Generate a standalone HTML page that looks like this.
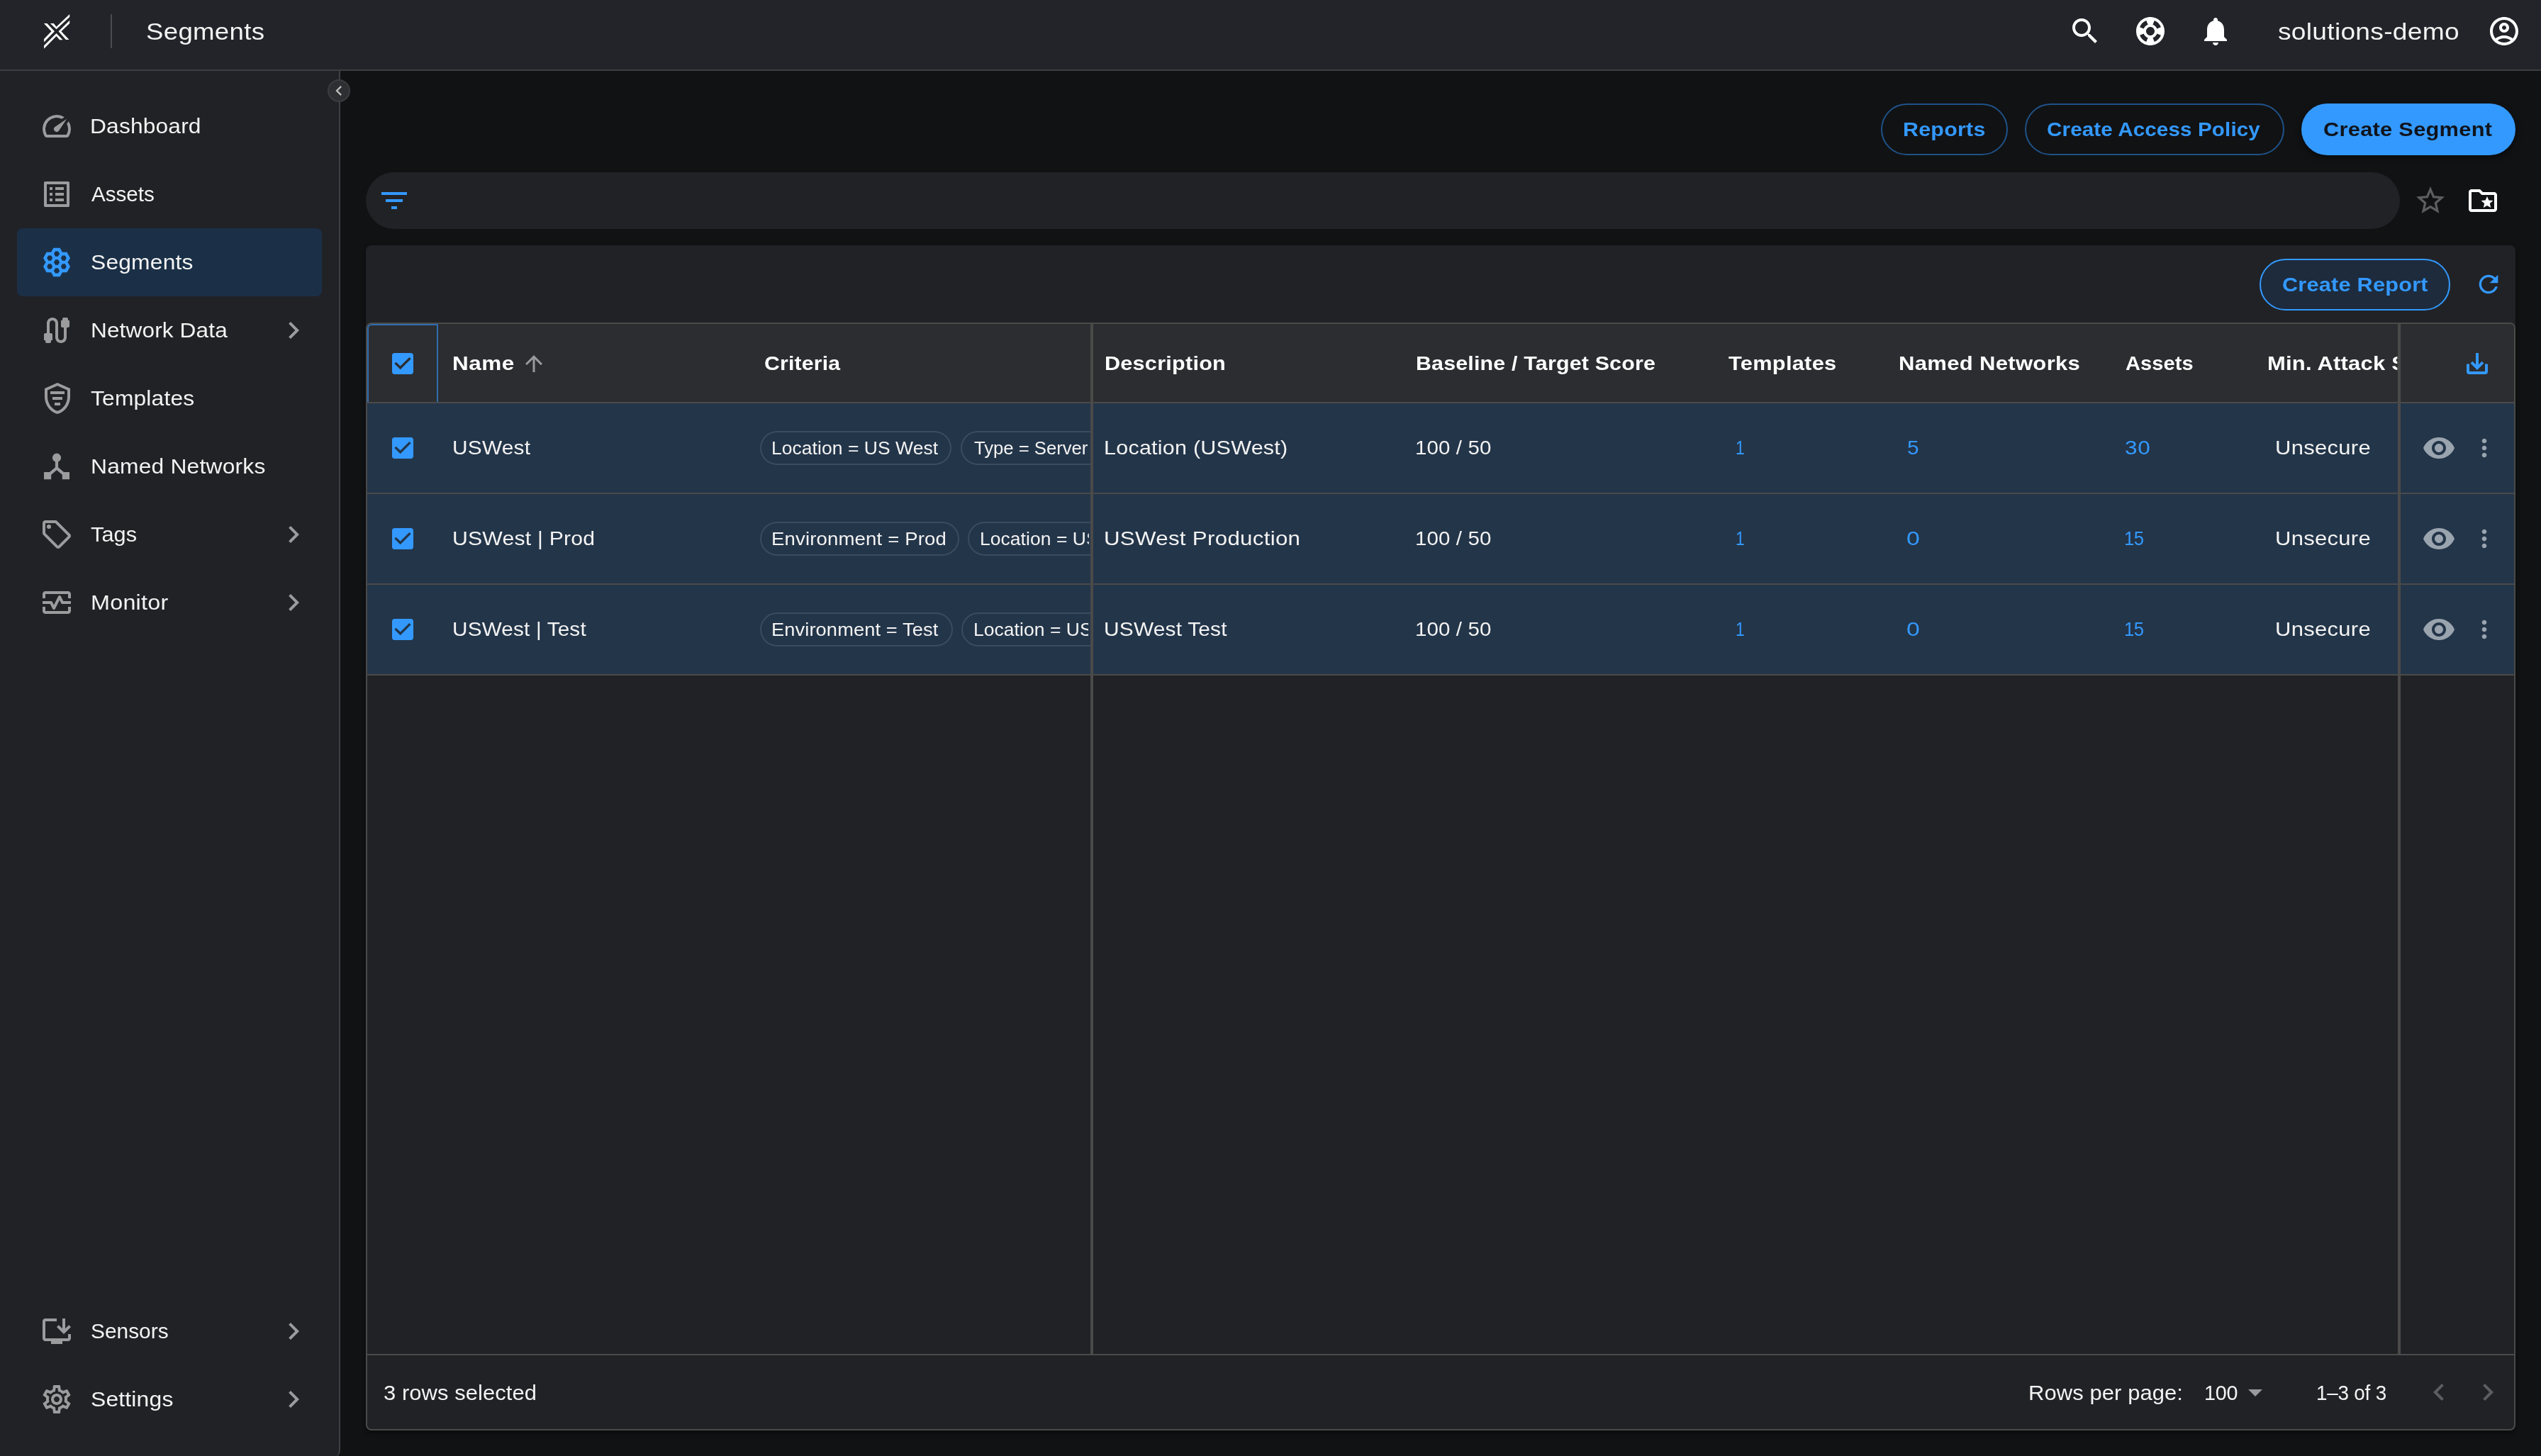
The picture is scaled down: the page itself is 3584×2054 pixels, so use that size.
<!DOCTYPE html>
<html lang="en"><head><meta charset="utf-8"><title>Segments</title>
<style>
html,body{margin:0;padding:0}
html{overflow:hidden;background:#111214}
body{width:100vw;height:calc(100vw * 0.5731027);min-width:0;background:#111214;position:relative;overflow:hidden;font-family:"Liberation Sans", sans-serif}
#app{position:absolute;left:0;top:0;width:3584px;height:2054px;overflow:hidden;will-change:transform;transform-origin:0 0;transform:scale(tan(atan2(100vw,3584px)))}
#app div,#app svg,#app span,#app header,#app nav,#app main,#app section,#app footer,#app a,#app h1{position:absolute;display:block;margin:0;padding:0;text-decoration:none}
.g{left:0;top:0;width:0;height:0;overflow:visible}
.t{white-space:nowrap;line-height:1;transform-origin:0 0}
</style></head><body><div id="app">
<header class="g" role="banner">
<div style="left:0px;top:0px;width:3584px;height:98px;background:#232429;border-bottom:2px solid #3d3e42"></div>
<svg style="left:40px;top:0px" width="80" height="98" viewBox="40 0 80 98"><g fill="#fff"><polygon points="61.9,33.1 66.4,33.1 77,44.2 62.1,59.5 62.1,55 72.5,44.2"/><polygon points="98.2,19.9 98.2,23.9 79.5,41.3 70.8,33.1 75.8,33.1 79.5,37.8"/><polygon points="98.2,28.75 98.2,33 86.4,44.2 97.5,55.9 92.9,55.9 82.5,44.2"/><polygon points="62.1,68.65 62.1,64.3 79.5,47.1 88.6,56.2 84,56.2 79.5,50.9"/></g></svg>
<div style="left:156px;top:20px;width:2px;height:48px;background:#4b4c50"></div>
<h1 class="t" style="left:205.52px;top:27.21px;font-size:34px;font-weight:400;color:#f3f3f3;letter-spacing:0.273px;transform:scaleX(1.0772)">Segments</h1>
<svg style="left:2917px;top:20px" width="48" height="48" viewBox="0 0 24 24" fill="#fff"><path fill-rule="evenodd" d="M15.5 14h-.79l-.28-.27C15.41 12.59 16 11.11 16 9.5 16 5.91 13.09 3 9.5 3S3 5.91 3 9.5 5.91 16 9.5 16c1.61 0 3.09-.59 4.23-1.57l.27.28v.79l5 4.99L20.49 19l-4.99-5zm-6 0C7.01 14 5 11.99 5 9.5S7.01 5 9.5 5 14 7.01 14 9.5 11.99 14 9.5 14z"/></svg>
<svg style="left:3009px;top:20px" width="48" height="48" viewBox="0 0 24 24" fill="#fff"><path fill-rule="evenodd" d="M12 2C6.48 2 2 6.48 2 12s4.48 10 10 10 10-4.48 10-10S17.52 2 12 2zm7.46 7.12-2.78 1.15c-.51-1.36-1.58-2.44-2.95-2.94l1.15-2.78c2.1.8 3.77 2.47 4.58 4.57zM12 15c-1.66 0-3-1.34-3-3s1.34-3 3-3 3 1.34 3 3-1.34 3-3 3zM9.13 4.54l1.17 2.78c-1.38.5-2.47 1.59-2.98 2.97L4.54 9.13c.81-2.11 2.48-3.78 4.59-4.59zM4.54 14.87l2.78-1.15c.51 1.38 1.59 2.46 2.97 2.96l-1.17 2.78c-2.1-.81-3.77-2.48-4.58-4.59zm10.34 4.59-1.15-2.78c1.37-.51 2.45-1.59 2.95-2.97l2.78 1.17c-.81 2.1-2.48 3.77-4.58 4.58z"/></svg>
<svg style="left:3101px;top:20px" width="48" height="48" viewBox="0 0 24 24" fill="#fff"><path fill-rule="evenodd" d="M12 22c1.1 0 2-.9 2-2h-4c0 1.1.89 2 2 2zm6-6v-5c0-3.07-1.64-5.64-4.5-6.32V4c0-.83-.67-1.5-1.5-1.5s-1.5.67-1.5 1.5v.68C7.63 5.36 6 7.92 6 11v5l-2 2v1h16v-1l-2-2z"/></svg>
<span class="t" style="left:3212.80px;top:27.21px;font-size:34px;font-weight:400;color:#f3f3f3;letter-spacing:0.264px;transform:scaleX(1.0923)">solutions-demo</span>
<svg style="left:3508px;top:20px" width="48" height="48" viewBox="0 0 24 24" fill="#fff"><path fill-rule="evenodd" d="M12 2C6.48 2 2 6.48 2 12s4.48 10 10 10 10-4.48 10-10S17.52 2 12 2zM7.35 18.5C8.66 17.56 10.26 17 12 17s3.34.56 4.65 1.5c-1.31.94-2.91 1.5-4.65 1.5s-3.34-.56-4.65-1.5zm10.79-1.38C16.45 15.8 14.32 15 12 15s-4.45.8-6.14 2.12C4.7 15.73 4 13.95 4 12c0-4.42 3.58-8 8-8s8 3.58 8 8c0 1.95-.7 3.73-1.86 5.12zM12 6c-1.93 0-3.5 1.57-3.5 3.5S10.07 13 12 13s3.5-1.57 3.5-3.5S13.93 6 12 6zm0 5c-.83 0-1.5-.67-1.5-1.5S11.17 8 12 8s1.5.67 1.5 1.5S12.83 11 12 11z"/></svg>
</header>
<nav class="g" aria-label="Main navigation">
<div style="left:0px;top:100px;width:478px;height:1956px;background:#212226;border-right:2px solid #3f4044;border-radius:0 0 10px 0"></div>
<div style="left:462px;top:112px;width:32px;height:32px;border-radius:50%;background:#2d2f32;border:2px solid #3b3d40;box-sizing:border-box"></div>
<svg style="left:464px;top:114px" width="28" height="28" viewBox="0 0 24 24" fill="#bdbdbd"><path fill-rule="evenodd" d="M15.41 7.41 14 6l-6 6 6 6 1.41-1.41L10.83 12z"/></svg>
<div style="left:24px;top:322px;width:430px;height:96px;background:#1b3047;border-radius:8px"></div>
<svg style="left:56px;top:154px" width="48" height="48" viewBox="0 0 24 24" fill="#9c9c9e"><path fill-rule="evenodd" d="m20.38 8.57-1.23 1.85a8 8 0 0 1-.22 7.58H5.07A8 8 0 0 1 15.58 6.85l1.85-1.23A10 10 0 0 0 3.35 19a2 2 0 0 0 1.72 1h13.85a2 2 0 0 0 1.74-1 10 10 0 0 0-.27-10.44zm-9.79 6.84a2 2 0 0 0 2.83 0l5.66-8.49-8.49 5.66a2 2 0 0 0 0 2.83z"/></svg>
<a class="t" style="left:126.89px;top:163.10px;font-size:30px;font-weight:400;color:#f3f3f3;letter-spacing:0.169px;transform:scaleX(1.0566)">Dashboard</a>
<svg style="left:56px;top:250px" width="48" height="48" viewBox="0 0 24 24" fill="#9c9c9e"><path fill-rule="evenodd" d="M11 7h6v2h-6zm0 4h6v2h-6zm0 4h6v2h-6zM7 7h2v2H7zm0 4h2v2H7zm0 4h2v2H7zM20.1 3H3.9c-.5 0-.9.4-.9.9v16.2c0 .4.4.9.9.9h16.2c.4 0 .9-.5.9-.9V3.9c0-.5-.5-.9-.9-.9zM19 19H5V5h14v14z"/></svg>
<a class="t" style="left:128.60px;top:259.10px;font-size:30px;font-weight:400;color:#f3f3f3;letter-spacing:-0.034px;transform:scaleX(0.9892)">Assets</a>
<svg style="left:56px;top:346px" width="48" height="48" viewBox="0 0 24 24"><g transform="translate(12 12) scale(0.95 1) translate(-12 -12)"><path d="M15.45 12.00 L13.73 14.99 L10.28 14.99 L8.55 12.00 L10.27 9.01 L13.73 9.01ZM15.45 6.02 L13.73 9.01 L10.28 9.01 L8.55 6.02 L10.27 3.04 L13.73 3.04ZM15.45 17.98 L13.73 20.96 L10.28 20.96 L8.55 17.98 L10.27 14.99 L13.73 14.99ZM20.62 9.01 L18.90 12.00 L15.45 12.00 L13.73 9.01 L15.45 6.02 L18.90 6.02ZM20.62 14.99 L18.90 17.98 L15.45 17.98 L13.73 14.99 L15.45 12.00 L18.90 12.00ZM10.27 9.01 L8.55 12.00 L5.10 12.00 L3.37 9.01 L5.10 6.02 L8.55 6.02ZM10.27 14.99 L8.55 17.98 L5.10 17.98 L3.37 14.99 L5.10 12.00 L8.55 12.00Z" fill="none" stroke="#3399ff" stroke-width="2.35" stroke-linejoin="miter"/></g></svg>
<a class="t" aria-current="page" style="left:128.04px;top:355.10px;font-size:30px;font-weight:400;color:#f3f3f3;letter-spacing:0.187px;transform:scaleX(1.0589)">Segments</a>
<svg style="left:56px;top:442px" width="48" height="48" viewBox="0 0 24 24" fill="#9c9c9e"><path fill-rule="evenodd" d="M20 5V4c0-.55-.45-1-1-1h-2c-.55 0-1 .45-1 1v1h-1v4c0 .55.45 1 1 1h1v7c0 1.1-.9 2-2 2s-2-.9-2-2V7c0-2.21-1.79-4-4-4S5 4.79 5 7v7H4c-.55 0-1 .45-1 1v4h1v1c0 .55.45 1 1 1h2c.55 0 1-.45 1-1v-1h1v-4c0-.55-.45-1-1-1H7V7c0-1.1.9-2 2-2s2 .9 2 2v10c0 2.21 1.79 4 4 4s4-1.79 4-4v-7h1c.55 0 1-.45 1-1V5h-1z"/></svg>
<a class="t" style="left:128.40px;top:451.10px;font-size:30px;font-weight:400;color:#f3f3f3;letter-spacing:0.141px;transform:scaleX(1.0513)">Network Data</a>
<svg style="left:390px;top:442px" width="48" height="48" viewBox="0 0 24 24" fill="#9c9c9e"><path fill-rule="evenodd" d="M10 6 8.59 7.41 13.17 12l-4.58 4.59L10 18l6-6z"/></svg>
<svg style="left:56.5px;top:538px" width="48" height="48" viewBox="0 0 24 24" fill="#9c9c9e"><path fill-rule="evenodd" d="M12 1 3 5v6c0 5.55 3.84 10.74 9 12 5.16-1.26 9-6.45 9-12V5l-9-4zm0 2.18 7 3.12v4.7c0 4.52-2.98 8.69-7 9.93-4.02-1.24-7-5.41-7-9.93V6.3l7-3.12zM7 7h10v2H7zm1.5 4h7v2h-7zm1.5 4h4v2h-4z"/></svg>
<a class="t" style="left:128.30px;top:547.10px;font-size:30px;font-weight:400;color:#f3f3f3;letter-spacing:0.166px;transform:scaleX(1.0587)">Templates</a>
<svg style="left:56px;top:634px" width="48" height="48" viewBox="0 0 24 24"><circle cx="12" cy="5.85" r="3.05" fill="#9c9c9e"/><rect x="3" y="16" width="5.1" height="5.1" fill="#9c9c9e"/><rect x="15.9" y="16" width="5.1" height="5.1" fill="#9c9c9e"/><path d="M12 6V13.2M12 13.2L5.6 18.6M12 13.2L18.4 18.6" stroke="#9c9c9e" stroke-width="2.1" fill="none"/></svg>
<a class="t" style="left:128.38px;top:643.10px;font-size:30px;font-weight:400;color:#f3f3f3;letter-spacing:0.175px;transform:scaleX(1.0600)">Named Networks</a>
<svg style="left:56px;top:730px" width="48" height="48" viewBox="0 0 24 24" fill="#9c9c9e"><path fill-rule="evenodd" d="m21.41 11.58-9-9C12.05 2.22 11.55 2 11 2H4c-1.1 0-2 .9-2 2v7c0 .55.22 1.05.59 1.42l9 9c.36.36.86.58 1.41.58s1.05-.22 1.41-.59l7-7c.37-.36.59-.86.59-1.41s-.23-1.06-.59-1.42zM13 20.01 4 11V4h7v-.01l9 9-7 7.02z"/><circle cx="6.5" cy="6.5" r="1.5"/></svg>
<a class="t" style="left:128.30px;top:739.10px;font-size:30px;font-weight:400;color:#f3f3f3;letter-spacing:0.080px;transform:scaleX(1.0222)">Tags</a>
<svg style="left:390px;top:730px" width="48" height="48" viewBox="0 0 24 24" fill="#9c9c9e"><path fill-rule="evenodd" d="M10 6 8.59 7.41 13.17 12l-4.58 4.59L10 18l6-6z"/></svg>
<svg style="left:56px;top:826px" width="48" height="48" viewBox="0 0 24 24" fill="#9c9c9e"><path fill-rule="evenodd" d="M20 4H4c-1.1 0-2 .9-2 2v3h2V6h16v3h2V6c0-1.1-.9-2-2-2zm0 14H4v-3H2v3c0 1.1.9 2 2 2h16c1.1 0 2-.9 2-2v-3h-2v3zM14.89 7.55c-.34-.68-1.45-.68-1.79 0L10 13.76l-1.11-2.21A.988.988 0 0 0 8 11H2v2h5.38l1.72 3.45c.18.34.52.55.9.55s.72-.21.89-.55L14 10.24l1.11 2.21c.17.34.51.55.89.55h6v-2h-5.38l-1.73-3.45z"/></svg>
<a class="t" style="left:128.34px;top:835.10px;font-size:30px;font-weight:400;color:#f3f3f3;letter-spacing:0.210px;transform:scaleX(1.0785)">Monitor</a>
<svg style="left:390px;top:826px" width="48" height="48" viewBox="0 0 24 24" fill="#9c9c9e"><path fill-rule="evenodd" d="M10 6 8.59 7.41 13.17 12l-4.58 4.59L10 18l6-6z"/></svg>
<svg style="left:56px;top:1854px" width="48" height="48" viewBox="0 0 24 24" fill="#9c9c9e"><path fill-rule="evenodd" d="M20 17H4V5h8V3H4c-1.11 0-2 .89-2 2v12c0 1.1.89 2 2 2h4v2h8v-2h4c1.1 0 2-.9 2-2v-3h-2v3zm-3-3 5-5-1.41-1.41L18 10.17V3h-2v7.17l-2.59-2.58L12 9z"/></svg>
<a class="t" style="left:128.00px;top:1863.10px;font-size:30px;font-weight:400;color:#f3f3f3;letter-spacing:-0.011px;transform:scaleX(0.9964)">Sensors</a>
<svg style="left:390px;top:1854px" width="48" height="48" viewBox="0 0 24 24" fill="#9c9c9e"><path fill-rule="evenodd" d="M10 6 8.59 7.41 13.17 12l-4.58 4.59L10 18l6-6z"/></svg>
<svg style="left:56px;top:1950px" width="48" height="48" viewBox="0 0 24 24" fill="#9c9c9e"><path fill-rule="evenodd" d="M19.43 12.98c.04-.32.07-.64.07-.98 0-.34-.03-.66-.07-.98l2.11-1.65c.19-.15.24-.42.12-.64l-2-3.46c-.09-.16-.26-.25-.44-.25-.06 0-.12.01-.17.03l-2.49 1c-.52-.4-1.08-.73-1.69-.98l-.38-2.65C14.46 2.18 14.25 2 14 2h-4c-.25 0-.46.18-.49.42l-.38 2.65c-.61.25-1.17.59-1.69.98l-2.49-1c-.06-.02-.12-.03-.18-.03-.17 0-.34.09-.43.25l-2 3.46c-.13.22-.07.49.12.64l2.11 1.65c-.04.32-.07.65-.07.98 0 .33.03.66.07.98l-2.11 1.65c-.19.15-.24.42-.12.64l2 3.46c.09.16.26.25.44.25.06 0 .12-.01.17-.03l2.49-1c.52.4 1.08.73 1.69.98l.38 2.65c.03.24.24.42.49.42h4c.25 0 .46-.18.49-.42l.38-2.65c.61-.25 1.17-.59 1.69-.98l2.49 1c.06.02.12.03.18.03.17 0 .34-.09.43-.25l2-3.46c.12-.22.07-.49-.12-.64l-2.11-1.65zm-1.98-1.71c.04.31.05.52.05.73 0 .21-.02.43-.05.73l-.14 1.13.89.7 1.08.84-.7 1.21-1.27-.51-1.04-.42-.9.68c-.43.32-.84.56-1.25.73l-1.06.43-.16 1.13-.2 1.35h-1.4l-.19-1.35-.16-1.13-1.06-.43c-.43-.18-.83-.41-1.23-.71l-.91-.7-1.06.43-1.27.51-.7-1.21 1.08-.84.89-.7-.14-1.13c-.03-.31-.05-.54-.05-.74s.02-.43.05-.73l.14-1.13-.89-.7-1.08-.84.7-1.21 1.27.51 1.04.42.9-.68c.43-.32.84-.56 1.25-.73l1.06-.43.16-1.13.2-1.35h1.39l.19 1.35.16 1.13 1.06.43c.43.18.83.41 1.23.71l.91.7 1.06-.43 1.27-.51.7 1.21-1.07.85-.89.7.14 1.13zM12 8c-2.21 0-4 1.79-4 4s1.79 4 4 4 4-1.79 4-4-1.79-4-4-4zm0 6c-1.1 0-2-.9-2-2s.9-2 2-2 2 .9 2 2-.9 2-2 2z"/></svg>
<a class="t" style="left:127.94px;top:1959.10px;font-size:30px;font-weight:400;color:#f3f3f3;letter-spacing:0.157px;transform:scaleX(1.0623)">Settings</a>
<svg style="left:390px;top:1950px" width="48" height="48" viewBox="0 0 24 24" fill="#9c9c9e"><path fill-rule="evenodd" d="M10 6 8.59 7.41 13.17 12l-4.58 4.59L10 18l6-6z"/></svg>
</nav>
<main class="g">
<section class="g" aria-label="Actions">
<div style="left:2653px;top:146px;width:179px;height:73px;border-radius:36.5px;box-sizing:border-box;border:2px solid #1f5288"></div>
<span class="t" style="left:2684.12px;top:168.69px;font-size:28px;font-weight:700;color:#3399ff;letter-spacing:0.239px;transform:scaleX(1.0847)">Reports</span>
<div style="left:2856px;top:146px;width:366px;height:73px;border-radius:36.5px;box-sizing:border-box;border:2px solid #1f5288"></div>
<span class="t" style="left:2887.44px;top:168.69px;font-size:28px;font-weight:700;color:#3399ff;letter-spacing:0.139px;transform:scaleX(1.0559)">Create Access Policy</span>
<div style="left:3246px;top:146px;width:302px;height:73px;border-radius:36.5px;box-sizing:border-box;background:#3399ff;box-shadow:0 4px 8px rgba(0,0,0,.5)"></div>
<span class="t" style="left:3277.40px;top:168.69px;font-size:28px;font-weight:700;color:#10141c;letter-spacing:0.259px;transform:scaleX(1.0989)">Create Segment</span>
</section>
<section class="g" aria-label="Filter">
<div style="left:516px;top:243px;width:2869px;height:80px;border-radius:40px;box-sizing:border-box;background:#212226"></div>
<svg style="left:532px;top:259px" width="48" height="48" viewBox="0 0 24 24" fill="#3399ff"><path fill-rule="evenodd" d="M10 18h4v-2h-4v2zM3 6v2h18V6H3zm3 7h12v-2H6v2z"/></svg>
<svg style="left:3404px;top:259px" width="48" height="48" viewBox="0 0 24 24" fill="#5d5e62"><path fill-rule="evenodd" d="m22 9.24-7.19-.62L12 2 9.19 8.63 2 9.24l5.46 4.73L5.82 21 12 17.27 18.18 21l-1.63-7.03L22 9.24zM12 15.4l-3.76 2.27 1-4.28-3.32-2.88 4.38-.38L12 6.1l1.71 4.04 4.38.38-3.32 2.88 1 4.28L12 15.4z"/></svg>
<svg style="left:3478px;top:259px" width="48" height="48" viewBox="0 0 24 24" fill="#fff"><path fill-rule="evenodd" d="M20 6h-8l-2-2H4c-1.1 0-2 .9-2 2v12c0 1.1.9 2 2 2h16c1.1 0 2-.9 2-2V8c0-1.1-.9-2-2-2zm0 12H4V6h5.17l2 2H20v10zm-6.92-3.96L12.39 17 15 15.47 17.61 17l-.69-2.96 2.3-1.99-3.03-.26L15 9l-1.19 2.79-3.03.26z"/></svg>
</section>
<section class="g" aria-label="Segments table">
<div style="left:516px;top:346px;width:3032px;height:1672px;background:#212226;border-radius:8px;box-shadow:0 3px 6px rgba(0,0,0,.45)"></div>
<div style="left:3187px;top:365px;width:269px;height:73px;border-radius:36.5px;box-sizing:border-box;border:2px solid #3399ff;background:#1d2b3c"></div>
<span class="t" style="left:3218.51px;top:387.69px;font-size:28px;font-weight:700;color:#3399ff;letter-spacing:0.232px;transform:scaleX(1.0937)">Create Report</span>
<svg style="left:3490px;top:381px" width="40" height="40" viewBox="0 0 24 24" fill="#3399ff"><path fill-rule="evenodd" d="M17.65 6.35C16.2 4.9 14.21 4 12 4c-4.42 0-7.99 3.58-7.99 8s3.57 8 7.99 8c3.73 0 6.84-2.55 7.73-6h-2.08c-.82 2.33-3.04 4-5.65 4-3.31 0-6-2.69-6-6s2.69-6 6-6c1.66 0 3.14.69 4.22 1.78L13 11h7V4l-2.35 2.35z"/></svg>
<div class="g" role="grid" aria-rowcount="4">
<div style="left:516px;top:455px;width:3032px;height:1563px;border:2px solid #4a4a49;border-radius:8px;box-sizing:border-box"></div>
<div style="left:518px;top:457px;width:3028px;height:110px;background:#2c2d30;border-radius:6px 6px 0 0"></div>
<div style="left:518px;top:567px;width:3028px;height:2px;background:#4a4a49"></div>
<div style="left:518px;top:569px;width:3028px;height:126px;background:#233549"></div>
<div style="left:518px;top:695px;width:3028px;height:2px;background:#4a4a49"></div>
<div style="left:518px;top:697px;width:3028px;height:126px;background:#233549"></div>
<div style="left:518px;top:823px;width:3028px;height:2px;background:#4a4a49"></div>
<div style="left:518px;top:825px;width:3028px;height:126px;background:#233549"></div>
<div style="left:518px;top:951px;width:3028px;height:2px;background:#4a4a49"></div>
<div style="left:518px;top:1910px;width:3028px;height:2px;background:#4a4a49"></div>
<div style="left:1538px;top:457px;width:4px;height:1453px;background:#4a4a49"></div>
<div style="left:3382px;top:457px;width:4px;height:1453px;background:#4a4a49"></div>
<div style="left:518px;top:457px;width:100px;height:110px;border:2px solid #2f6db0;border-bottom:none;box-sizing:border-box;border-radius:6px 0 0 0"></div>
<div class="g" role="row">
<svg style="left:548px;top:493px" width="40" height="40" viewBox="0 0 24 24" fill="#3399ff"><path fill-rule="evenodd" d="M19 3H5c-1.11 0-2 .9-2 2v14c0 1.1.89 2 2 2h14c1.11 0 2-.9 2-2V5c0-1.1-.89-2-2-2zm-9 14-5-5 1.41-1.41L10 14.17l7.59-7.59L19 8l-9 9z"/></svg>
<span class="t" style="left:637.78px;top:498.99px;font-size:28px;font-weight:700;color:#fff;letter-spacing:0.485px;transform:scaleX(1.1242)">Name</span>
<svg style="left:735px;top:495px" width="36" height="36" viewBox="0 0 24 24" fill="#9a9a9c"><path fill-rule="evenodd" d="m4 12 1.41 1.41L11 7.83V20h2V7.83l5.58 5.59L20 12l-8-8-8 8z"/></svg>
<span class="t" style="left:1077.62px;top:498.99px;font-size:28px;font-weight:700;color:#fff;letter-spacing:0.178px;transform:scaleX(1.0779)">Criteria</span>
<span class="t" style="left:1557.71px;top:498.99px;font-size:28px;font-weight:700;color:#fff;letter-spacing:0.228px;transform:scaleX(1.0927)">Description</span>
<span class="t" style="left:1997.32px;top:498.99px;font-size:28px;font-weight:700;color:#fff;letter-spacing:0.189px;transform:scaleX(1.0835)">Baseline / Target Score</span>
<span class="t" style="left:2438.40px;top:498.99px;font-size:28px;font-weight:700;color:#fff;letter-spacing:0.267px;transform:scaleX(1.0980)">Templates</span>
<span class="t" style="left:2677.79px;top:498.99px;font-size:28px;font-weight:700;color:#fff;letter-spacing:0.297px;transform:scaleX(1.1073)">Named Networks</span>
<span class="t" style="left:2998.20px;top:498.99px;font-size:28px;font-weight:700;color:#fff;letter-spacing:0.108px;transform:scaleX(1.0348)">Assets</span>
<span class="t" style="left:3197.50px;top:498.99px;font-size:28px;font-weight:700;color:#fff;letter-spacing:0.214px;transform:scaleX(1.1044);width:166.1px;overflow:hidden">Min. Attack Surface</span>
<svg style="left:3474px;top:493px" width="40" height="40" viewBox="0 0 40 40"><g fill="none" stroke="#3399ff" stroke-width="4"><path d="M7 20.5V31a2 2 0 0 0 2 2H31a2 2 0 0 0 2 -2V20.5"/><path d="M20 5V25"/><path d="M12 18.2L20 26.2L28 18.2"/></g></svg>
</div>
<div class="g" role="row" aria-selected="true">
<svg style="left:548px;top:612px" width="40" height="40" viewBox="0 0 24 24" fill="#3399ff"><path fill-rule="evenodd" d="M19 3H5c-1.11 0-2 .9-2 2v14c0 1.1.89 2 2 2h14c1.11 0 2-.9 2-2V5c0-1.1-.89-2-2-2zm-9 14-5-5 1.41-1.41L10 14.17l7.59-7.59L19 8l-9 9z"/></svg>
<span class="t" style="left:637.57px;top:618.29px;font-size:28px;font-weight:400;color:#f3f3f3;letter-spacing:0.217px;transform:scaleX(1.0653)">USWest</span>
<div style="left:1072px;top:608px;width:270.4000000000001px;height:48px;border:2px solid #3b4b60;border-radius:24px;box-sizing:border-box"></div>
<span class="t" style="left:1088.46px;top:618.79px;font-size:26px;font-weight:400;color:#f3f3f3;letter-spacing:0.043px;transform:scaleX(1.0186)">Location = US West</span>
<div style="left:1355.4px;top:608px;width:182.5999999999999px;height:48px;overflow:hidden"><div style="left:0;top:0;width:204.6px;height:48px;border:2px solid #3b4b60;border-radius:24px;box-sizing:border-box"></div></div>
<span class="t" style="left:1373.90px;top:618.79px;font-size:26px;font-weight:400;color:#f3f3f3;letter-spacing:-0.028px;transform:scaleX(0.9884)">Type = Server</span>
<span class="t" style="left:1556.82px;top:618.29px;font-size:28px;font-weight:400;color:#f3f3f3;letter-spacing:0.210px;transform:scaleX(1.0900)">Location (USWest)</span>
<span class="t" style="left:1995.90px;top:618.29px;font-size:28px;font-weight:400;color:#f3f3f3;letter-spacing:0.124px;transform:scaleX(1.0523)">100 / 50</span>
<span class="t" style="left:2448.17px;top:618.29px;font-size:28px;font-weight:400;color:#3399ff;letter-spacing:0.000px;transform:scaleX(0.8154)">1</span>
<span class="t" style="left:2689.64px;top:618.29px;font-size:28px;font-weight:400;color:#3399ff;letter-spacing:0.000px;transform:scaleX(1.0643)">5</span>
<span class="t" style="left:2997.08px;top:618.29px;font-size:28px;font-weight:400;color:#3399ff;letter-spacing:0.577px;transform:scaleX(1.1244)">30</span>
<span class="t" style="left:3209.19px;top:618.29px;font-size:28px;font-weight:400;color:#f3f3f3;letter-spacing:0.282px;transform:scaleX(1.1054)">Unsecure</span>
<svg style="left:3416px;top:608px" width="48" height="48" viewBox="0 0 24 24" fill="#9aa4af"><path fill-rule="evenodd" d="M12 4.5C7 4.5 2.73 7.61 1 12c1.73 4.39 6 7.5 11 7.5s9.27-3.11 11-7.5c-1.73-4.39-6-7.5-11-7.5zM12 17c-2.76 0-5-2.24-5-5s2.24-5 5-5 5 2.24 5 5-2.24 5-5 5zm0-8c-1.66 0-3 1.34-3 3s1.34 3 3 3 3-1.34 3-3-1.34-3-3-3z"/></svg>
<svg style="left:3484px;top:612px" width="40" height="40" viewBox="0 0 24 24" fill="#9aa4af"><path fill-rule="evenodd" d="M12 8c1.1 0 2-.9 2-2s-.9-2-2-2-2 .9-2 2 .9 2 2 2zm0 2c-1.1 0-2 .9-2 2s.9 2 2 2 2-.9 2-2-.9-2-2-2zm0 6c-1.1 0-2 .9-2 2s.9 2 2 2 2-.9 2-2-.9-2-2-2z"/></svg>
</div>
<div class="g" role="row" aria-selected="true">
<svg style="left:548px;top:740px" width="40" height="40" viewBox="0 0 24 24" fill="#3399ff"><path fill-rule="evenodd" d="M19 3H5c-1.11 0-2 .9-2 2v14c0 1.1.89 2 2 2h14c1.11 0 2-.9 2-2V5c0-1.1-.89-2-2-2zm-9 14-5-5 1.41-1.41L10 14.17l7.59-7.59L19 8l-9 9z"/></svg>
<span class="t" style="left:637.54px;top:746.29px;font-size:28px;font-weight:400;color:#f3f3f3;letter-spacing:0.193px;transform:scaleX(1.0783)">USWest | Prod</span>
<div style="left:1072px;top:736px;width:280.5999999999999px;height:48px;border:2px solid #3b4b60;border-radius:24px;box-sizing:border-box"></div>
<span class="t" style="left:1088.38px;top:746.79px;font-size:26px;font-weight:400;color:#f3f3f3;letter-spacing:0.134px;transform:scaleX(1.0605)">Environment = Prod</span>
<div style="left:1365.2px;top:736px;width:172.79999999999995px;height:48px;overflow:hidden"><div style="left:0;top:0;width:274.8px;height:48px;border:2px solid #3b4b60;border-radius:24px;box-sizing:border-box"></div></div>
<span class="t" style="left:1381.66px;top:746.79px;font-size:26px;font-weight:400;color:#f3f3f3;letter-spacing:0.043px;transform:scaleX(1.0186);width:150.5px;overflow:hidden">Location = US West</span>
<span class="t" style="left:1556.77px;top:746.29px;font-size:28px;font-weight:400;color:#f3f3f3;letter-spacing:0.275px;transform:scaleX(1.1159)">USWest Production</span>
<span class="t" style="left:1995.90px;top:746.29px;font-size:28px;font-weight:400;color:#f3f3f3;letter-spacing:0.124px;transform:scaleX(1.0523)">100 / 50</span>
<span class="t" style="left:2448.17px;top:746.29px;font-size:28px;font-weight:400;color:#3399ff;letter-spacing:0.000px;transform:scaleX(0.8154)">1</span>
<span class="t" style="left:2689.49px;top:746.29px;font-size:28px;font-weight:400;color:#3399ff;letter-spacing:0.000px;transform:scaleX(1.2071)">0</span>
<span class="t" style="left:2996.37px;top:746.29px;font-size:28px;font-weight:400;color:#3399ff;letter-spacing:-0.471px;transform:scaleX(0.9146)">15</span>
<span class="t" style="left:3209.19px;top:746.29px;font-size:28px;font-weight:400;color:#f3f3f3;letter-spacing:0.282px;transform:scaleX(1.1054)">Unsecure</span>
<svg style="left:3416px;top:736px" width="48" height="48" viewBox="0 0 24 24" fill="#9aa4af"><path fill-rule="evenodd" d="M12 4.5C7 4.5 2.73 7.61 1 12c1.73 4.39 6 7.5 11 7.5s9.27-3.11 11-7.5c-1.73-4.39-6-7.5-11-7.5zM12 17c-2.76 0-5-2.24-5-5s2.24-5 5-5 5 2.24 5 5-2.24 5-5 5zm0-8c-1.66 0-3 1.34-3 3s1.34 3 3 3 3-1.34 3-3-1.34-3-3-3z"/></svg>
<svg style="left:3484px;top:740px" width="40" height="40" viewBox="0 0 24 24" fill="#9aa4af"><path fill-rule="evenodd" d="M12 8c1.1 0 2-.9 2-2s-.9-2-2-2-2 .9-2 2 .9 2 2 2zm0 2c-1.1 0-2 .9-2 2s.9 2 2 2 2-.9 2-2-.9-2-2-2zm0 6c-1.1 0-2 .9-2 2s.9 2 2 2 2-.9 2-2-.9-2-2-2z"/></svg>
</div>
<div class="g" role="row" aria-selected="true">
<svg style="left:548px;top:868px" width="40" height="40" viewBox="0 0 24 24" fill="#3399ff"><path fill-rule="evenodd" d="M19 3H5c-1.11 0-2 .9-2 2v14c0 1.1.89 2 2 2h14c1.11 0 2-.9 2-2V5c0-1.1-.89-2-2-2zm-9 14-5-5 1.41-1.41L10 14.17l7.59-7.59L19 8l-9 9z"/></svg>
<span class="t" style="left:637.58px;top:874.29px;font-size:28px;font-weight:400;color:#f3f3f3;letter-spacing:0.150px;transform:scaleX(1.0620)">USWest | Test</span>
<div style="left:1072px;top:864px;width:271.5999999999999px;height:48px;border:2px solid #3b4b60;border-radius:24px;box-sizing:border-box"></div>
<span class="t" style="left:1088.40px;top:874.79px;font-size:26px;font-weight:400;color:#f3f3f3;letter-spacing:0.105px;transform:scaleX(1.0477)">Environment = Test</span>
<div style="left:1356.2px;top:864px;width:181.79999999999995px;height:48px;overflow:hidden"><div style="left:0;top:0;width:273.8px;height:48px;border:2px solid #3b4b60;border-radius:24px;box-sizing:border-box"></div></div>
<span class="t" style="left:1372.66px;top:874.79px;font-size:26px;font-weight:400;color:#f3f3f3;letter-spacing:0.043px;transform:scaleX(1.0186);width:159.3px;overflow:hidden">Location = US West</span>
<span class="t" style="left:1556.86px;top:874.29px;font-size:28px;font-weight:400;color:#f3f3f3;letter-spacing:0.178px;transform:scaleX(1.0676)">USWest Test</span>
<span class="t" style="left:1995.90px;top:874.29px;font-size:28px;font-weight:400;color:#f3f3f3;letter-spacing:0.124px;transform:scaleX(1.0523)">100 / 50</span>
<span class="t" style="left:2448.17px;top:874.29px;font-size:28px;font-weight:400;color:#3399ff;letter-spacing:0.000px;transform:scaleX(0.8154)">1</span>
<span class="t" style="left:2689.49px;top:874.29px;font-size:28px;font-weight:400;color:#3399ff;letter-spacing:0.000px;transform:scaleX(1.2071)">0</span>
<span class="t" style="left:2996.37px;top:874.29px;font-size:28px;font-weight:400;color:#3399ff;letter-spacing:-0.471px;transform:scaleX(0.9146)">15</span>
<span class="t" style="left:3209.19px;top:874.29px;font-size:28px;font-weight:400;color:#f3f3f3;letter-spacing:0.282px;transform:scaleX(1.1054)">Unsecure</span>
<svg style="left:3416px;top:864px" width="48" height="48" viewBox="0 0 24 24" fill="#9aa4af"><path fill-rule="evenodd" d="M12 4.5C7 4.5 2.73 7.61 1 12c1.73 4.39 6 7.5 11 7.5s9.27-3.11 11-7.5c-1.73-4.39-6-7.5-11-7.5zM12 17c-2.76 0-5-2.24-5-5s2.24-5 5-5 5 2.24 5 5-2.24 5-5 5zm0-8c-1.66 0-3 1.34-3 3s1.34 3 3 3 3-1.34 3-3-1.34-3-3-3z"/></svg>
<svg style="left:3484px;top:868px" width="40" height="40" viewBox="0 0 24 24" fill="#9aa4af"><path fill-rule="evenodd" d="M12 8c1.1 0 2-.9 2-2s-.9-2-2-2-2 .9-2 2 .9 2 2 2zm0 2c-1.1 0-2 .9-2 2s.9 2 2 2 2-.9 2-2-.9-2-2-2zm0 6c-1.1 0-2 .9-2 2s.9 2 2 2 2-.9 2-2-.9-2-2-2z"/></svg>
</div>
</div>
<footer class="g">
<span class="t" style="left:540.97px;top:1949.50px;font-size:30px;font-weight:400;color:#f3f3f3;letter-spacing:0.077px;transform:scaleX(1.0308)">3 rows selected</span>
<span class="t" style="left:2861.24px;top:1949.50px;font-size:30px;font-weight:400;color:#f3f3f3;letter-spacing:0.086px;transform:scaleX(1.0319)">Rows per page:</span>
<span class="t" style="left:3108.59px;top:1949.50px;font-size:30px;font-weight:400;color:#f3f3f3;letter-spacing:-0.186px;transform:scaleX(0.9575)">100</span>
<svg style="left:3157px;top:1940px" width="48" height="48" viewBox="0 0 24 24" fill="#9a9a9c"><path fill-rule="evenodd" d="m7 10 5 5 5-5z"/></svg>
<span class="t" style="left:3267.05px;top:1949.50px;font-size:30px;font-weight:400;color:#f3f3f3;letter-spacing:-0.211px;transform:scaleX(0.9265)">1–3 of 3</span>
<svg style="left:3415.5px;top:1940px" width="48" height="48" viewBox="0 0 24 24" fill="#5c5d61"><path fill-rule="evenodd" d="M15.41 7.41 14 6l-6 6 6 6 1.41-1.41L10.83 12z"/></svg>
<svg style="left:3484.5px;top:1940px" width="48" height="48" viewBox="0 0 24 24" fill="#5c5d61"><path fill-rule="evenodd" d="M10 6 8.59 7.41 13.17 12l-4.58 4.59L10 18l6-6z"/></svg>
</footer>
</section>
</main>
</div>
<script>
(function(){var a=document.getElementById('app');function f(){var w=window.innerWidth||document.documentElement.clientWidth||3584;a.style.transform='scale('+(w/3584)+')';}f();window.addEventListener('resize',f);})();
</script>
</body></html>
